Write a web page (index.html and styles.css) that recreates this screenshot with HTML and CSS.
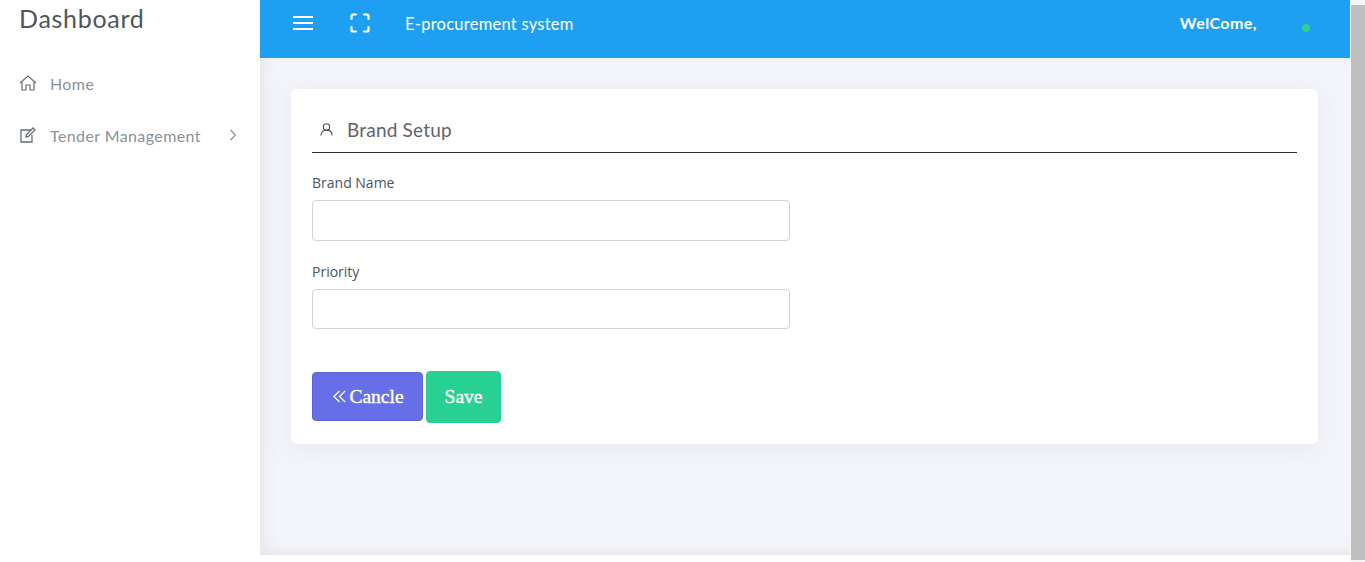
FILE: index.html
```html
<!DOCTYPE html>
<html lang="en">
<head>
<meta charset="utf-8">
<title>Brand Setup</title>
<link rel="stylesheet" href="styles.css">
</head>
<body>
<div class="app">
  <aside class="sidebar">
    <div class="brand">Dashboard</div>
    <nav class="menu">
      <a class="menu-item">
        <svg class="menu-icon" viewBox="0 0 18 18" fill="none" stroke="currentColor" stroke-width="1.2"><path d="M1 9 9 2l8 7"/><path d="M3 8v8h4v-5h4v5h4V8"/></svg>
        <span>Home</span>
      </a>
      <a class="menu-item">
        <svg class="menu-icon" viewBox="0 0 18 18" fill="none" stroke="currentColor" stroke-width="1.3"><path d="M12 4H2v12h11V9"/><path d="M7 11l.5-2.5L14 2l2 2-6.500 6.500z"/></svg>
        <span class="menu-label">Tender Management</span>
        <svg class="chevron" viewBox="0 0 8 12" fill="none" stroke="currentColor" stroke-width="1.1"><path d="M1.500 1l5 5-5 5"/></svg>
      </a>
    </nav>
  </aside>
  <div class="main">
    <header class="topbar">
      <svg class="top-icon" viewBox="0 0 20 16" fill="none" stroke="currentColor" stroke-width="2"><path d="M0 2h20M0 8h20M0 14h20"/></svg>
      <svg class="top-icon expand" viewBox="0 0 20 20" fill="none" stroke="currentColor" stroke-width="2.200" stroke-linecap="round"><path d="M1.500 6V3a1.500 1.500 0 0 1 1.500-1.500h3M14 1.500h3A1.500 1.500 0 0 1 18.500 3v3M18.500 14v3a1.500 1.500 0 0 1-1.500 1.500h-3M6 18.500H3A1.500 1.500 0 0 1 1.500 17v-3"/></svg>
      <span class="system">E-procurement system</span>
      <strong class="welcome">WelCome,</strong>
      <span class="status"></span>
    </header>
    <main class="content">
      <section class="card">
        <h1 class="card-title">
          <svg class="title-icon" viewBox="0 0 14 14" fill="none" stroke="currentColor" stroke-width="1.200"><circle cx="7" cy="4.200" r="3.400"/><path d="M1 13.500c0-3.500 2.300-5.800 6-5.800s6 2.300 6 5.800"/></svg>
          <span>Brand Setup</span>
        </h1>
        <form class="form">
          <label class="field"><span class="field-label">Brand Name</span><input class="input brand-input" type="text"></label>
          <label class="field"><span class="field-label">Priority</span><input class="input" type="text"></label>
          <div class="actions">
            <button type="button" class="btn btn-cancel"><svg class="btn-icon" viewBox="0 0 14 14" fill="none" stroke="currentColor" stroke-width="1.400"><path d="M7 1 1 7l6 6M13 1 7 7l6 6"/></svg>Cancle</button>
            <button type="button" class="btn btn-save">Save</button>
          </div>
        </form>
      </section>
    </main>
    <footer class="footer"></footer>
  </div>
  <div class="scrollbar"><div class="thumb"></div></div>
</div>
</body>
</html>
```
FILE: styles.css
```css
* { box-sizing: border-box; }
html, body { margin: 0; height: 100%; overflow: hidden; }
body { font-family: "Lato", "Open Sans", sans-serif; background: #fff; }
.app { display: flex; height: 562px; }

.sidebar { width: 260px; flex: none; background: #fff; color: #6b747b; }
.brand { font-size: 25px; font-weight: 400; line-height: 30px; color: #50555b; padding: 3px 0 0 19px; letter-spacing: .7px; }
.menu { display: flex; flex-direction: column; padding: 37px 23px 0 19px; gap: 26px; }
.menu-item { display: flex; align-items: center; height: 26px; font-size: 16px; font-weight: 400; letter-spacing: .4px; color: #8a9299; }
.menu-icon { width: 18px; height: 18px; margin-right: 13px; color: #646d74; flex: none; }
.menu-label { flex: 1; }
.chevron { width: 8px; height: 12px; color: #868e94; }

.main { width: 1090px; flex: none; display: flex; flex-direction: column; }
.topbar { height: 58px; flex: none; background: #1e9ff2; color: #fff; display: flex; align-items: center; padding: 0 40px 12px 33px; }
.top-icon { width: 20px; height: 16px; flex: none; }
.top-icon.expand { width: 20px; height: 20px; margin-left: 37px; }
.system { font-size: 16.500px; margin-left: 35px; letter-spacing: .25px; flex: 1; position: relative; top: 1px; }
.welcome { font-size: 16px; font-weight: 700; letter-spacing: .45px; margin-right: 45px; position: relative; top: -1px; }
.status { width: 8px; height: 8px; border-radius: 50%; background: #2bd18f; position: relative; top: 5px; }

.content { flex: 1; background: #f4f5fa; padding: 31px 32px 0 31px; box-shadow: inset 12px 0 16px -10px #e1e3ea, inset 0 -12px 14px -10px #e3e4ea; }
.card { background: #fff; height: 355px; border-radius: 6px; padding: 21px 21px 0; box-shadow: 0 4px 20px rgba(210, 213, 228, .35); }
.card-title { margin: 0; height: 43px; display: flex; align-items: center; padding: 0 0 3px 8px; border-bottom: 1px solid #2b2b2b; font-size: 19px; font-weight: 400; letter-spacing: .2px; color: #5f646a; }
.title-icon { width: 13px; height: 13px; margin-right: 14px; color: #4a4f55; }

.form { display: flex; flex-direction: column; padding-top: 20px; }
.field { display: flex; flex-direction: column; width: 478px; margin-bottom: 21px; }
.field-label { font-family: "Open Sans", sans-serif; font-size: 14px; line-height: 19px; color: #4c5560; margin-bottom: 8px; }
.input { height: 40px; border: 1px solid #ced4da; border-radius: 4px; background: #fff; display: block; }
.brand-input { height: 41px; }
.field + .field { margin-bottom: 0; }

.actions { display: flex; align-items: flex-start; gap: 3px; margin-top: 42px; }
.btn { font-family: "Liberation Serif", serif; font-size: 19.500px; color: #fff; border-radius: 4px; padding: 0; -webkit-text-stroke: .4px #fff; }
.btn-cancel { width: 111px; height: 49px; margin-top: 1px; padding: 1px 0 0 2px; background: #666ee8; border: 1px solid #5a62d8; display: flex; align-items: center; justify-content: center; gap: 3px; }
.btn-icon { width: 13px; height: 13px; margin-top: -2px; flex: none; }
.btn-save { width: 75px; height: 52px; padding-bottom: 1px; background: #28d094; border: 1px solid #26c98e; }

.footer { height: 7px; flex: none; background: #fff; }
.scrollbar { width: 15px; flex: none; background: #f5f5f5; padding: 5px 0 2px 1px; }
.thumb { height: 100%; background: #bfbfbf; }
```
